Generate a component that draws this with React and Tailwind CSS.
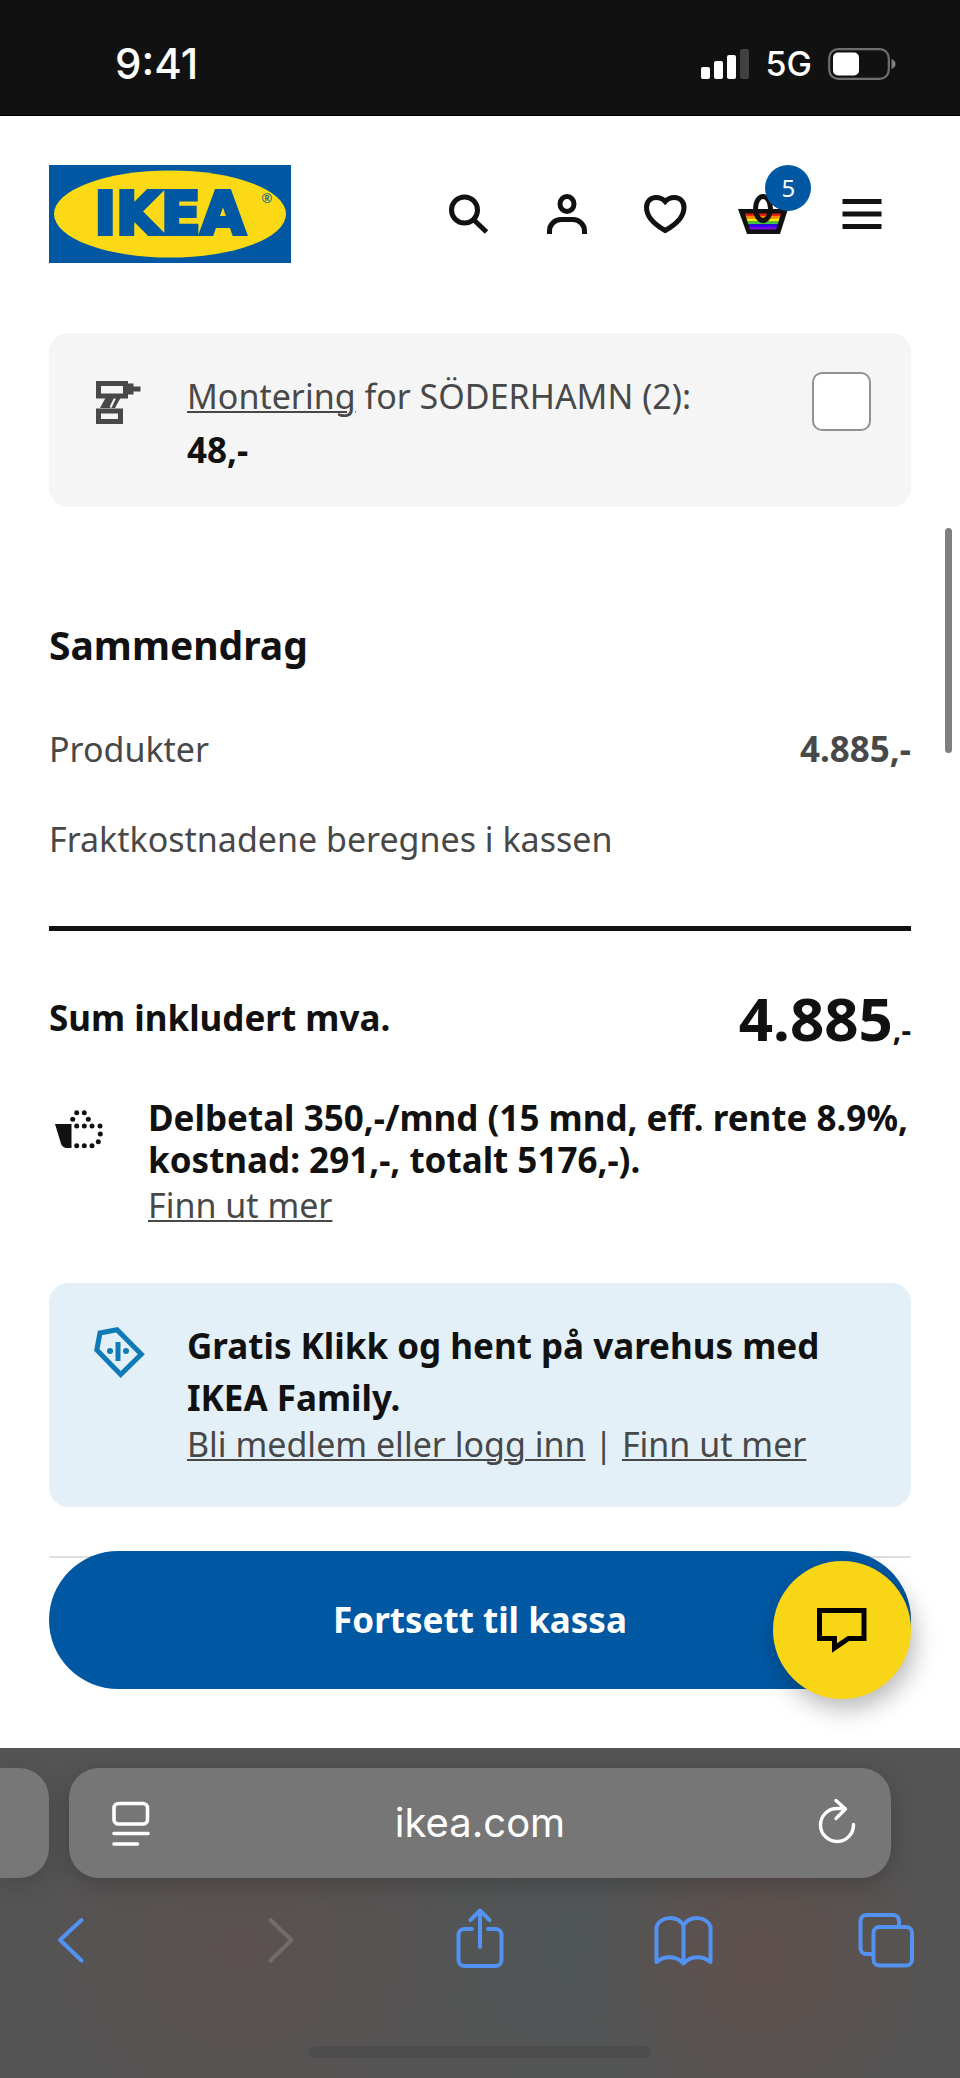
import { useState } from "react";

const Icon = ({ children, size = 60, className = "size-[60px]" }) => (
  <svg viewBox={`0 0 ${size} ${size}`} className={`shrink-0 ${className}`} fill="none" aria-hidden="true">
    {children}
  </svg>
);

const StatusBar = () => (
  <div className="flex items-center justify-between h-[116px] pt-[13px] pl-[115px] pr-[64px] bg-[#111111] border-b border-black font-['Inter',sans-serif] text-white">
    <span className="text-[42px] leading-[48px] font-medium">9:41</span>
    <div className="flex items-center gap-4">
      <svg width="50" height="32" viewBox="0 0 50 32" aria-hidden="true">
        <rect x="1" y="19" width="9" height="12" rx="2" fill="#fff" />
        <rect x="14" y="13" width="9" height="18" rx="2" fill="#fff" />
        <rect x="27" y="7" width="9" height="24" rx="2" fill="#fff" />
        <rect x="40" y="1" width="9" height="30" rx="2" fill="#414141" />
      </svg>
      <span className="text-[34px] leading-[48px] font-medium">5G</span>
      <svg width="68" height="32" viewBox="0 0 68 32" aria-hidden="true">
        <rect x="1.2" y="1.2" width="59.6" height="29.6" rx="9" fill="none" stroke="#6f6f6f" strokeWidth="2.2" />
        <rect x="5" y="4.5" width="26" height="23" rx="5" fill="#fff" />
        <path d="M63.5 11c3 1 4 3 4 5s-1 4-4 5z" fill="#7f7f7f" />
      </svg>
    </div>
  </div>
);

const Logo = () => (
  <svg viewBox="0 0 242 98" className="w-[242px] h-[98px]" role="img" aria-label="IKEA">
    <rect width="242" height="98" fill="#0058a3" />
    <ellipse cx="121" cy="49" rx="116" ry="43.5" fill="#fbd914" />
    <text
      x="121"
      y="69"
      textAnchor="middle"
      fontFamily="DejaVu Sans, sans-serif"
      fontWeight="700"
      fontSize="58"
      fill="#0058a3"
      stroke="#0058a3"
      strokeWidth="4"
    >
      IKEA
    </text>
    <text x="218" y="38" textAnchor="middle" fontFamily="Noto Sans, sans-serif" fontSize="13" fill="#0058a3">
      ®
    </text>
  </svg>
);

const SearchIcon = () => (
  <Icon>
    <circle cx="26.5" cy="26" r="13" stroke="#111" strokeWidth="5" />
    <path d="M35.5 35.5 48.5 48" stroke="#111" strokeWidth="5" />
  </Icon>
);

const PersonIcon = () => (
  <Icon>
    <ellipse cx="30" cy="20" rx="7" ry="7.4" stroke="#111" strokeWidth="5" />
    <path d="M12.5 50v-3A11.5 11.5 0 0 1 24 35.5h12A11.5 11.5 0 0 1 47.5 47v3" stroke="#111" strokeWidth="5" />
  </Icon>
);

const HeartIcon = () => (
  <Icon>
    <path
      d="M30.2 17.5C27.5 14.5 24.5 13.5 21 13.5c-5.500 0-9.500 4-9.500 10 0 9.500 8 17 18.700 23 10.700-6 18.800-13.500 18.800-23 0-6-4-10-9.500-10-3.500 0-6.600 1-9.300 4Z"
      stroke="#111"
      strokeWidth="5"
    />
  </Icon>
);

const stripes = ["#e8190f", "#ff8c00", "#fff000", "#3fc545", "#3300f5", "#7a0be0"];

const BasketIcon = () => (
  <Icon>
    <clipPath id="basket">
      <path d="M12 29.500h36L43 45.500H17z" />
    </clipPath>
    <path d="M5 25h50l-8 25H14z" fill="#111" />
    <g clipPath="url(#basket)">
      {stripes.map((color, i) => (
        <rect key={color} x="8" y={29 + i * 2.8} width="44" height="3" fill={color} />
      ))}
    </g>
    <ellipse cx="30" cy="24.500" rx="7.500" ry="12" stroke="#111" strokeWidth="5" />
  </Icon>
);

const MenuIcon = () => (
  <Icon>
    <path d="M10.500 17.500h39M10.500 30h39M10.500 42.500h39" stroke="#111" strokeWidth="5" />
  </Icon>
);

const Header = () => {
  const button = "flex flex-1 items-center justify-center";
  return (
    <header className="flex items-center justify-between px-[49px] py-[49px] bg-white">
      <a href="#hjem">
        <Logo />
      </a>
      <nav className="flex w-[492px]">
        <button type="button" className={button} aria-label="Søk"><SearchIcon /></button>
        <button type="button" className={button} aria-label="Logg inn"><PersonIcon /></button>
        <button type="button" className={button} aria-label="Favoritter"><HeartIcon /></button>
        <button type="button" className={button} aria-label="Handlekurv">
          <span className="relative">
            <BasketIcon />
            <span className="absolute left-8 -top-[19px] flex items-center justify-center size-[46px] rounded-full bg-[#0058a3] text-white text-2xl">
              5
            </span>
          </span>
        </button>
        <button type="button" className={button} aria-label="Meny"><MenuIcon /></button>
      </nav>
    </header>
  );
};

const AssemblyCard = () => {
  const [checked, setChecked] = useState(false);

  return (
    <section className="flex items-start gap-[38px] px-10 pt-[39px] pb-[33px] rounded-[20px] bg-[#f5f5f5]">
      <Icon>
        <path d="M17 25h15l-6 11H11z" fill="#484848" />
        <path d="m26 26-4.500 9.500" stroke="#f5f5f5" strokeWidth="2" />
        <path d="M9.500 11.500h27V24h-27zM9.500 39h22v10.500h-22z" stroke="#484848" strokeWidth="5" />
        <path d="M39 11.500h5.500v3h7v5h-7v3H39z" fill="#484848" />
      </Icon>
      <label htmlFor="assembly" className="flex flex-col gap-1.5 flex-1">
        <span>
          <a href="#montering" className="underline decoration-2 underline-offset-2">Montering</a> for SÖDERHAMN (2):
        </span>
        <strong className="text-[35px] text-[#111111]">48,-</strong>
      </label>
      <input
        id="assembly"
        type="checkbox"
        checked={checked}
        onChange={(e) => setChecked(e.target.checked)}
        className="appearance-none shrink-0 size-[59px] rounded-[10px] border-2 border-[#929292] bg-white checked:bg-[#111111]"
      />
    </section>
  );
};

const dots = [
  [27.7, 15.7], [35.3, 15.7], [23.7, 22.3], [39.3, 22.3], [27.7, 29], [35.3, 29], [43, 29],
  [51, 29], [51.3, 37], [49.3, 44.7], [27.7, 48.7], [35.3, 48.7], [43, 48.7],
];

const Installments = () => (
  <section className="flex items-start gap-[39px] mt-[38px]">
    <Icon>
      <path d="M6 27h16.500v24H19c-4.500 0-6.500-2-7.500-6z" fill="#111" />
      {dots.map(([x, y]) => (
        <circle key={`${x}-${y}`} cx={x} cy={y} r="2.500" fill="#111" />
      ))}
    </Icon>
    <div className="flex-1">
      <p className="text-[35px] leading-[42px] font-bold text-[#111111]">
        Delbetal 350,-/mnd (15 mnd, eff. rente 8.9%, kostnad: 291,-, totalt 5176,-).
      </p>
      <a href="#delbetal" className="block w-fit underline decoration-2 underline-offset-2">Finn ut mer</a>
    </div>
  </section>
);

const FamilyCard = () => (
  <section className="flex items-start gap-[38px] mt-[54px] px-10 pt-[37px] pb-[43px] rounded-[20px] bg-[#e3f0f8]">
    <Icon>
      <path d="M11 13 28 9.800l24.300 24.400-20.600 20.300L7.800 30z" stroke="#0f7ab8" strokeWidth="5" />
      <path d="M26.500 22h5v19h-5z" fill="#0f7ab8" />
      <circle cx="21" cy="31" r="3" fill="#0f7ab8" />
      <circle cx="37" cy="31" r="3" fill="#0f7ab8" />
    </Icon>
    <div className="flex-1">
      <p className="text-[35px] leading-[52px] font-bold text-[#111111]">
        Gratis Klikk og hent på varehus med IKEA Family.
      </p>
      <p className="leading-[40px]">
        <a href="#medlem" className="underline decoration-2 underline-offset-2">Bli medlem eller logg inn</a>
        {" | "}
        <a href="#family" className="underline decoration-2 underline-offset-2">Finn ut mer</a>
      </p>
    </div>
  </section>
);

const Checkout = () => (
  <div className="mt-[49px] border-t-2 border-[#dfdfdf]">
    <div className="relative -mt-[7px]">
      <button type="button" className="block w-full h-[138px] rounded-full bg-[#0058a3] text-[35px] font-bold text-white">
        Fortsett til kassa
      </button>
      <button
        type="button"
        aria-label="Chat"
        className="absolute right-0 top-[10px] flex items-center justify-center size-[138px] rounded-full bg-[#f8d616] shadow-[4px_10px_24px_rgba(0,0,0,0.28)]"
      >
        <Icon>
          <path d="M7.500 10.500h44.500V38.500H36.500L22.500 48v-9.500H7.500z" stroke="#000" strokeWidth="5" />
        </Icon>
      </button>
    </div>
  </div>
);

const BrowserBar = () => {
  const stroke = { stroke: "#5392f0", strokeWidth: 4, strokeLinecap: "round", strokeLinejoin: "round" };
  const tool = { size: 64, className: "size-16" };
  return (
    <footer className="pt-5 pb-5 overflow-hidden bg-[#545454] bg-[radial-gradient(circle_at_240px_200px,#5b5150_0,transparent_220px),radial-gradient(circle_at_760px_210px,#5f504c_0,transparent_180px),radial-gradient(circle_at_580px_200px,#505658_0,transparent_170px)] font-['Inter',sans-serif]">
      <div className="flex gap-5 pr-[69px]">
        <div className="w-[49px] h-[110px] rounded-r-[30px] bg-[#777777] shadow-[0_6px_24px_rgba(0,0,0,0.15)]" />
        <div className="flex flex-1 items-center h-[110px] px-8 rounded-[30px] bg-[#777676] shadow-[0_6px_24px_rgba(0,0,0,0.2)]">
          <button type="button" aria-label="Sidemeny">
            <Icon>
              <g stroke="#fff" strokeWidth="3.600" strokeLinecap="round">
                <rect x="13" y="10.500" width="33.500" height="20.500" rx="4.500" />
                <path d="M13 40.500h34M13 51h23.500" />
              </g>
            </Icon>
          </button>
          <input
            type="text"
            aria-label="Adresse"
            defaultValue="ikea.com"
            className="flex-1 min-w-0 bg-transparent text-center text-[40px] leading-[48px] text-white outline-none"
          />
          <button type="button" aria-label="Last inn på nytt">
            <Icon>
              <path
                d="M54.500 31.500A16.500 16.500 0 1 1 38 15.500h8M37 7.500l9.500 8.500-9.500 9.500"
                stroke="#fff"
                strokeWidth="3.400"
                strokeLinecap="round"
                strokeLinejoin="round"
              />
            </Icon>
          </button>
        </div>
      </div>

      <div className="flex justify-between mt-7 px-[39px]">
        <button type="button" aria-label="Tilbake">
          <Icon {...tool}><path d="M42.500 14 21 34l21.500 20.500" {...stroke} /></Icon>
        </button>
        <button type="button" aria-label="Frem" disabled>
          <Icon {...tool}><path d="M26.500 14 47.500 34 26.500 54.500" {...stroke} stroke="#736c6a" /></Icon>
        </button>
        <button type="button" aria-label="Del">
          <Icon {...tool}>
            <path d="M24 23h-7.500a6 6 0 0 0-6 6v25a6 6 0 0 0 6 6h31a6 6 0 0 0 6-6V29a6 6 0 0 0-6-6H40M32 41V4.500M22.500 14 32 4.500l9.500 9.500" {...stroke} />
          </Icon>
        </button>
        <button type="button" aria-label="Bokmerker">
          <Icon {...tool}>
            <path d="M3.500 56V20.500C8 10 24 9 30.500 19.500 37 9 53 10 57.500 20.500V56c-8-6.500-20-6.500-27 1.500-7-8-19-8-27-1.500ZM30.500 19.500v37" {...stroke} />
          </Icon>
        </button>
        <button type="button" aria-label="Faner">
          <Icon {...tool}>
            <path d="M15.500 48H9.500a6 6 0 0 1-6-6V15a6 6 0 0 1 6-6H36a6 6 0 0 1 6 6v5" {...stroke} />
            <rect x="16.500" y="21" width="38.500" height="38.500" rx="6" {...stroke} />
          </Icon>
        </button>
      </div>

      <div className="w-[342px] h-3 mt-[76px] mx-auto rounded-full bg-[#4e4d4d]" />
    </footer>
  );
};

const App = () => (
  <div className="relative min-h-screen bg-white font-['Noto_Sans',sans-serif] text-[34px] leading-[48px] text-[#484848]">
    <StatusBar />
    <Header />

    <main className="px-[49px] pt-[21px] pb-[59px]">
      <AssemblyCard />

      <h2 className="mt-[110px] text-[39px] leading-[56px] font-bold text-[#111111]">Sammendrag</h2>
      <div className="flex justify-between mt-[52px]">
        <span>Produkter</span>
        <strong className="text-[35px]">4.885,-</strong>
      </div>
      <p className="mt-[42px]">Fraktkostnadene beregnes i kassen</p>

      <div className="flex items-center justify-between mt-[63px] pt-[46px] border-t-5 border-[#111111] text-[35px] font-bold text-[#111111]">
        <span>Sum inkludert mva.</span>
        <span className="text-[60px] leading-[82px]">
          4.885<span className="text-[30px] leading-none">,-</span>
        </span>
      </div>

      <Installments />
      <FamilyCard />
      <Checkout />
    </main>

    {/* overlay scroll indicator */}
    <div className="absolute right-2 top-[528px] w-[7px] h-[225px] rounded-full bg-[#7f7f7f]" />

    <BrowserBar />
  </div>
);

export default App;
